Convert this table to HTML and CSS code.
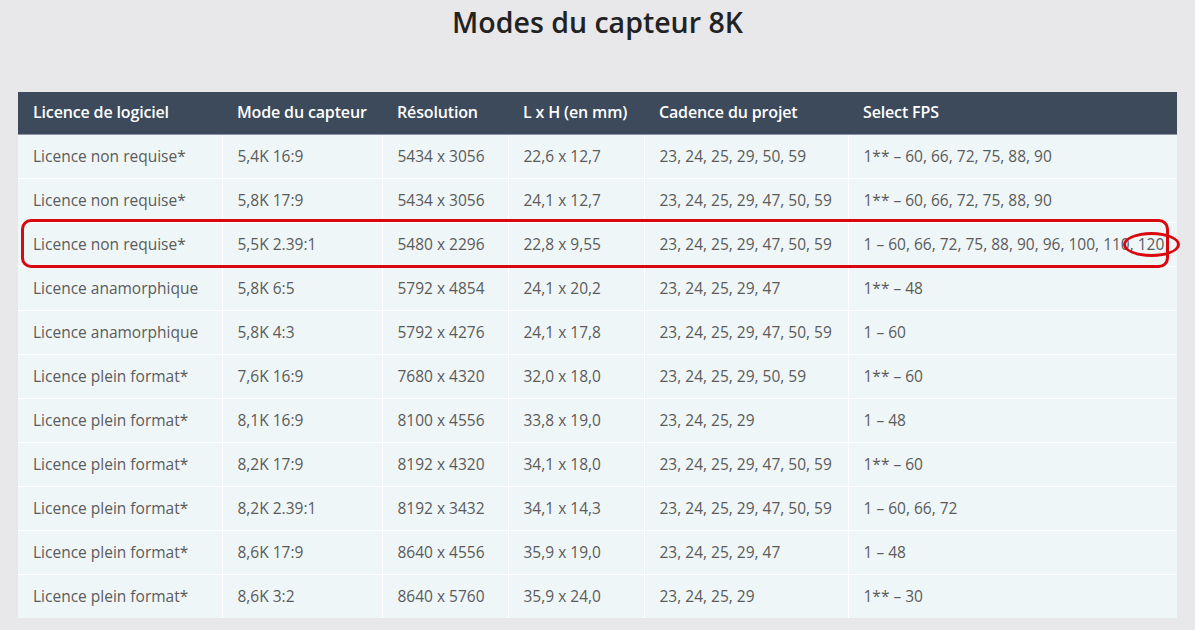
FILE: index.html
```html
<!DOCTYPE html>
<html>
<head>
	<meta charset="utf-8">
	<title>Modes du capteur 8K</title>
	<link rel="stylesheet" href="styles.css">
</head>
<body>
<h1 class="title">Modes du capteur 8K</h1>
<div class="wrap">
<table class="modes">
<colgroup>
	<col class="c1"><col class="c2"><col class="c3"><col class="c4"><col class="c5"><col class="c6">
</colgroup>
<thead>
<tr><th>Licence de logiciel</th><th>Mode du capteur</th><th>Résolution</th><th>L x H (en mm)</th><th>Cadence du projet</th><th>Select FPS</th></tr>
</thead>
<tbody>
<tr><td>Licence non requise*</td><td>5,4K 16:9</td><td>5434 x 3056</td><td>22,6 x 12,7</td><td>23, 24, 25, 29, 50, 59</td><td>1** – 60, 66, 72, 75, 88, 90</td></tr>
<tr><td>Licence non requise*</td><td>5,8K 17:9</td><td>5434 x 3056</td><td>24,1 x 12,7</td><td>23, 24, 25, 29, 47, 50, 59</td><td>1** – 60, 66, 72, 75, 88, 90</td></tr>
<tr class="marked"><td>Licence non requise*</td><td>5,5K 2.39:1</td><td>5480 x 2296</td><td>22,8 x 9,55</td><td>23, 24, 25, 29, 47, 50, 59</td><td>1 – 60, 66, 72, 75, 88, 90, 96, 100, 110, 120</td></tr>
<tr><td>Licence anamorphique</td><td>5,8K 6:5</td><td>5792 x 4854</td><td>24,1 x 20,2</td><td>23, 24, 25, 29, 47</td><td>1** – 48</td></tr>
<tr><td>Licence anamorphique</td><td>5,8K 4:3</td><td>5792 x 4276</td><td>24,1 x 17,8</td><td>23, 24, 25, 29, 47, 50, 59</td><td>1 – 60</td></tr>
<tr><td>Licence plein format*</td><td>7,6K 16:9</td><td>7680 x 4320</td><td>32,0 x 18,0</td><td>23, 24, 25, 29, 50, 59</td><td>1** – 60</td></tr>
<tr><td>Licence plein format*</td><td>8,1K 16:9</td><td>8100 x 4556</td><td>33,8 x 19,0</td><td>23, 24, 25, 29</td><td>1 – 48</td></tr>
<tr><td>Licence plein format*</td><td>8,2K 17:9</td><td>8192 x 4320</td><td>34,1 x 18,0</td><td>23, 24, 25, 29, 47, 50, 59</td><td>1** – 60</td></tr>
<tr><td>Licence plein format*</td><td>8,2K 2.39:1</td><td>8192 x 3432</td><td>34,1 x 14,3</td><td>23, 24, 25, 29, 47, 50, 59</td><td>1 – 60, 66, 72</td></tr>
<tr><td>Licence plein format*</td><td>8,6K 17:9</td><td>8640 x 4556</td><td>35,9 x 19,0</td><td>23, 24, 25, 29, 47</td><td>1 – 48</td></tr>
<tr><td>Licence plein format*</td><td>8,6K 3:2</td><td>8640 x 5760</td><td>35,9 x 24,0</td><td>23, 24, 25, 29</td><td>1** – 30</td></tr>
</tbody>
</table>
<div class="mark-row"></div>
<div class="mark-oval"></div>
</div>
</body>
</html>
```

FILE: styles.css
```css
body {
	margin: 0;
	background: #e8e7e9;
	font-family: "Open Sans", "Noto Sans", sans-serif;
	color: #5b5b5b;
}

.title {
	margin: 0;
	padding-top: 3px;
	height: 92px;
	box-sizing: border-box;
	text-align: center;
	font-size: 28.5px;
	font-weight: 600;
	color: #222;
	line-height: 38px;
}

.wrap {
	position: relative;
	margin: 0 18px;
}

table.modes {
	width: 100%;
	table-layout: fixed;
	border-collapse: collapse;
	background: #eff6f8;
}

col.c1 { width: 204px; }
col.c2 { width: 160px; }
col.c3 { width: 126px; }
col.c4 { width: 136px; }
col.c5 { width: 204px; }

th {
	background: #3c4a5c;
	color: #fff;
	height: 40px;
	padding: 0 0 2px 15px;
	text-align: left;
	font-weight: 600;
	font-size: 16px;
	letter-spacing: -0.15px;
	border-bottom: 1px solid #8e98a4;
}

td {
	height: 41px;
	padding: 0 0 2px 15px;
	font-size: 15.5px;
	font-weight: 400;
	white-space: nowrap;
	overflow: hidden;
	border: 1px solid #fff;
	border-top: 0;
}

td:first-child { border-left: 0; }
td:last-child { border-right: 0; }
tbody tr:last-child td { border-bottom: 0; }

.mark-row {
	position: absolute;
	left: 3px;
	top: 127px;
	width: 1148px;
	height: 49px;
	box-sizing: border-box;
	border: 3px solid #d9080f;
	border-radius: 10px;
}

.mark-oval {
	position: absolute;
	left: 1105px;
	top: 140px;
	width: 57px;
	height: 25px;
	box-sizing: border-box;
	border: 3px solid #d9080f;
	border-radius: 50%;
}
```
